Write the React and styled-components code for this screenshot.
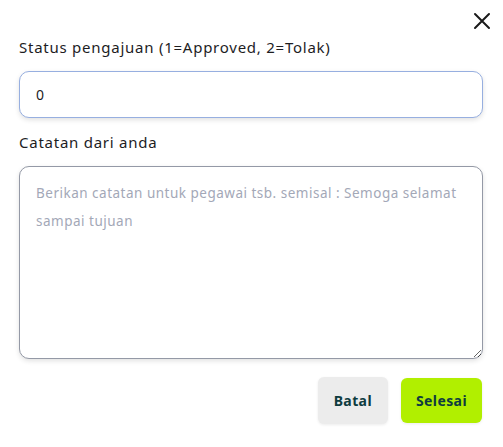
import React from 'react'
import styled, { createGlobalStyle } from "styled-components";

const Global = createGlobalStyle`
  body {
    margin: 0;
    background: #ffffff;
    font-family: "Noto Sans", "Liberation Sans", sans-serif;
  }
`;

const Modal = styled.div`
  width: 503px;
  height: 447px;
  box-sizing: border-box;
  padding: 10px 20px 0 19px;
  display: flex;
  flex-direction: column;
`;

const TopBar = styled.div`
  display: flex;
  justify-content: flex-end;
  height: 22px;
`;

const CloseButton = styled.button`
  border: none;
  background: none;
  padding: 0;
  margin-right: -10px;
  width: 22px;
  height: 22px;
  display: flex;
  align-items: center;
  justify-content: center;
  cursor: pointer;
`;

const Label = styled.label`
  display: block;
  font-size: 15px;
  color: #1d1d1f;
  margin-top: ${(p) => p.top}px;
  letter-spacing: 0.75px;
`;

const Input = styled.input`
  margin-top: 14px;
  box-sizing: border-box;
  width: 100%;
  height: 47px;
  border: 1.5px solid #97afe0;
  border-radius: 10px;
  padding: 0 16px;
  font-family: inherit;
  font-size: 14px;
  color: #1d1d1f;
  box-shadow: 0 2px 5px rgba(0, 0, 0, 0.12);
  outline: none;
`;

const TextArea = styled.textarea`
  margin-top: 14px;
  box-sizing: border-box;
  width: 100%;
  height: 193px;
  border: 1px solid #9499a6;
  border-radius: 10px;
  padding: 12px 16px;
  font-family: inherit;
  font-size: 13.5px;
  line-height: 28px;
  letter-spacing: 0.5px;
  color: #1d1d1f;
  box-shadow: 0 2px 5px rgba(0, 0, 0, 0.12);
  outline: none;
  resize: vertical;

  &::placeholder {
    color: #a3a8b7;
  }
`;

const Actions = styled.div`
  display: flex;
  justify-content: flex-end;
  align-items: center;
  gap: 13px;
  margin-top: 18px;
  padding-right: 1px;
`;

const Button = styled.button`
  height: ${(p) => (p.primary ? 45 : 47)}px;
  padding: 0 ${(p) => (p.primary ? 15 : 16)}px;
  border: none;
  border-radius: 6px;
  background: ${(p) => (p.primary ? "#b1ef00" : "#ececec")};
  color: #0e3b3f;
  font-family: inherit;
  font-weight: 700;
  font-size: 14px;
  letter-spacing: 0.4px;
  box-shadow: 0 1px 3px rgba(0, 0, 0, 0.08);
  cursor: pointer;
`;

const App = () => {
  return (
    <>
      <Global />
      <Modal>
        <TopBar>
          <CloseButton aria-label="close">
            <svg width="18" height="18" viewBox="0 0 18 18">
              <path d="M2 2L16 16M16 2L2 16" stroke="#1a1a1a" strokeWidth="2" strokeLinecap="round" />
            </svg>
          </CloseButton>
        </TopBar>
        <Label top={5}>Status pengajuan (1=Approved, 2=Tolak)</Label>
        <Input defaultValue="0" />
        <Label top={14}>Catatan dari anda</Label>
        <TextArea placeholder="Berikan catatan untuk pegawai tsb. semisal : Semoga selamat sampai tujuan" />
        <Actions>
          <Button>Batal</Button>
          <Button primary>Selesai</Button>
        </Actions>
      </Modal>
    </>
  )
}

export default App
